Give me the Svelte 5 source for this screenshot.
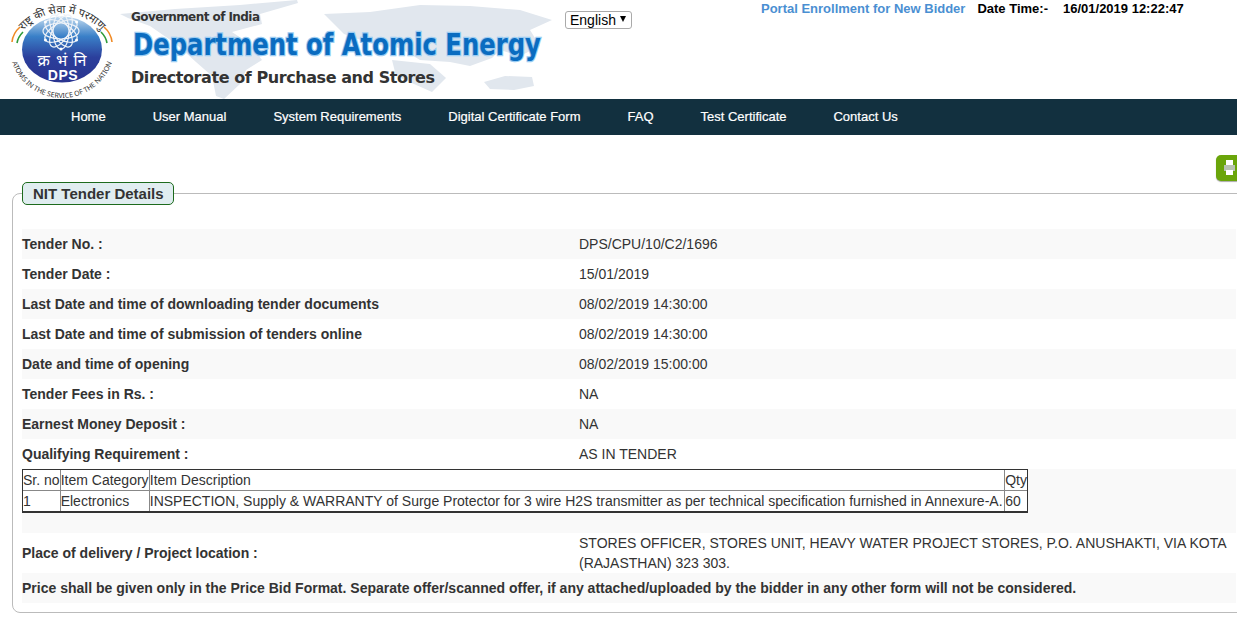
<script>
	const details = [
		['Tender No. :', 'DPS/CPU/10/C2/1696'],
		['Tender Date :', '15/01/2019'],
		['Last Date and time of downloading tender documents', '08/02/2019 14:30:00'],
		['Last Date and time of submission of tenders online', '08/02/2019 14:30:00'],
		['Date and time of opening', '08/02/2019 15:00:00'],
		['Tender Fees in Rs. :', 'NA'],
		['Earnest Money Deposit :', 'NA'],
		['Qualifying Requirement :', 'AS IN TENDER']
	];

	const menu = ['Home', 'User Manual', 'System Requirements', 'Digital Certificate Form', 'FAQ', 'Test Certificate', 'Contact Us'];

	// atom petals of the logo
	const petals = [0, 30, 60, 90, 120, 150];
	const dots = [0, 60, 120, 180, 240, 300];
</script>

<div class="page">
	<header>
		<svg class="brand" width="560" height="99" viewBox="0 0 560 99">
			<defs>
				<path id="arcTop" d="M 17 39 A 52 52 0 0 1 107 39" />
				<path id="arcBottom" d="M 9 45 A 53 53 0 0 0 115 45" />
				<linearGradient id="discFill" x1="0" y1="0" x2="0" y2="1">
					<stop offset="0" stop-color="#c4dcf0" />
					<stop offset="0.3" stop-color="#3a80c8" />
					<stop offset="0.62" stop-color="#2b3f9c" />
					<stop offset="1" stop-color="#2a3490" />
				</linearGradient>
			</defs>

			<!-- world map behind the title -->
			<g fill="#e1e7ee">
				<path d="M120 14 L175 9 L240 5 L297 0 L298 3 L260 14 L262 24 L232 32 L250 44 L262 60 L246 70 L240 84 L224 99 L216 96 L212 76 L196 62 L176 44 L150 26 L128 18 Z" />
				<path d="M324 14 L370 12 L420 5 L470 6 L520 10 L552 20 L530 30 L540 46 L520 56 L500 50 L492 58 L470 66 L450 62 L420 60 L400 48 L372 44 L344 34 Z" />
				<path d="M484 82 L505 76 L532 77 L534 86 L514 90 L490 89 Z" />
				<path d="M392 60 L430 64 L446 78 L432 92 L414 84 L396 76 Z" />
			</g>

			<text class="gov" x="131" y="20.5" textLength="129">Government of India</text>
			<text class="dept" transform="translate(133 55) scale(0.81 1)">Department of  Atomic Energy</text>
			<text class="dir" x="131" y="83" textLength="304">Directorate of  Purchase and Stores</text>

			<!-- DPS logo -->
			<ellipse cx="62" cy="49.5" rx="40" ry="33" fill="url(#discFill)" />
			<g fill="none" stroke="#eef2f8" stroke-width="1.2">
				{#each petals as a}
					<ellipse cx="61" cy="31" rx="8" ry="18" transform="rotate({a} 61 31)" />
				{/each}
			</g>
			<g fill="#fff">
				{#each dots as a}
					<circle cx="61" cy="13" r="1.5" transform="rotate({a} 61 31)" />
				{/each}
			</g>
			<text class="hin" x="62" y="66" text-anchor="middle">क्र भं नि</text>
			<text class="dps" x="63" y="80" text-anchor="middle">DPS</text>
			<text class="ring"><textPath href="#arcTop" startOffset="50%" text-anchor="middle">राष्ट्र की सेवा में परमाणु</textPath></text>
			<text class="ring en"><textPath href="#arcBottom" startOffset="50%" text-anchor="middle">ATOMS IN THE SERVICE OF THE NATION</textPath></text>
			<g fill="none" stroke-width="1.6">
				<path d="M12 42 Q13 33 20 27" stroke="#f08a24" />
				<path d="M17 43 Q18 37 23 32" stroke="#2e9b3a" />
				<path d="M112 42 Q111 33 104 27" stroke="#f08a24" />
				<path d="M107 43 Q106 37 101 32" stroke="#2e9b3a" />
			</g>
		</svg>

		<span class="lang">
			<select>
				<option>English</option>
			</select>
		</span>

		<a class="enroll" href="#enroll">Portal Enrollment for New Bidder</a>
		<span class="time-label">Date Time:-</span>
		<span class="time">16/01/2019 12:22:47</span>
	</header>

	<nav>
		{#each menu as item}
			<a href="#menu">{item}</a>
		{/each}
	</nav>

	<div class="tools">
		<button class="print" aria-label="Print">
			<svg width="11" height="16" viewBox="0 0 11 16">
				<path d="M2 0 H9 V5 H2 Z" fill="#fff" />
				<path d="M0 5 H11 V11 H0 Z" fill="#b9c2b4" />
				<path d="M2 10 H9 V15 H2 Z" fill="#fff" />
			</svg>
		</button>
	</div>

	<fieldset>
		<legend>NIT Tender Details</legend>

		{#each details as [label, value]}
			<div class="row">
				<div class="label">{label}</div>
				<div class="value">{value}</div>
			</div>
		{/each}

		<div class="row items">
			<table>
				<thead>
					<tr>
						<td class="c1">Sr. no</td>
						<td class="c2">Item Category</td>
						<td>Item Description</td>
						<td class="c4">Qty</td>
					</tr>
				</thead>
				<tbody>
					<tr>
						<td>1</td>
						<td>Electronics</td>
						<td>INSPECTION, Supply &amp; WARRANTY of Surge Protector for 3 wire H2S transmitter as per technical specification furnished in Annexure-A.</td>
						<td>60</td>
					</tr>
				</tbody>
			</table>
		</div>

		<div class="row tall">
			<div class="label">Place of delivery / Project location :</div>
			<div class="value">STORES OFFICER, STORES UNIT, HEAVY WATER PROJECT STORES, P.O. ANUSHAKTI, VIA KOTA (RAJASTHAN) 323 303.</div>
		</div>

		<div class="row">
			<div class="label wide">Price shall be given only in the Price Bid Format. Separate offer/scanned offer, if any attached/uploaded by the bidder in any other form will not be considered.</div>
		</div>
	</fieldset>
</div>

<style>
	:global(body) {
		margin: 0;
		background: #fff;
		overflow: hidden;
	}

	.page {
		width: 1237px;
		height: 632px;
		overflow: hidden;
		font-family: "Liberation Sans", Arial, sans-serif;
		font-size: 14px;
		color: #333;
	}

	header {
		display: flex;
		align-items: flex-start;
		height: 99px;
		font-size: 14px;
	}

	.brand {
		flex: none;
		display: block;
	}

	.gov, .dir {
		font-family: "DejaVu Sans", sans-serif;
		font-weight: bold;
		fill: #333;
	}

	.gov { font-size: 12px; }
	.dir { font-size: 16px; }

	.dept {
		font-family: "DejaVu Sans", sans-serif;
		font-weight: bold;
		font-size: 30px;
		fill: #0a6cc0;
		stroke: #9ccdf2;
		stroke-width: 2.5px;
		paint-order: stroke;
	}

	.hin {
		font-family: "Noto Sans", "DejaVu Sans", sans-serif;
		font-size: 16px;
		word-spacing: 2px;
		fill: #fff;
	}

	.dps {
		font-family: "Liberation Sans", sans-serif;
		font-weight: bold;
		font-size: 14px;
		letter-spacing: 0.6px;
		fill: #fff;
	}

	.ring {
		font-family: "Noto Sans", "DejaVu Sans", sans-serif;
		font-size: 11px;
		fill: #333;
	}

	.ring.en {
		font-size: 7px;
	}

	.lang {
		position: relative;
		display: block;
		margin: 11px 0 0 5px;
	}

	.lang::after {
		content: "";
		position: absolute;
		right: 6px;
		top: 5px;
		border-style: solid;
		border-width: 6px 3.5px 0;
		border-color: #000 transparent transparent;
		pointer-events: none;
	}

	select {
		display: block;
		appearance: none;
		width: 67px;
		height: 18px;
		padding: 0 0 0 4px;
		font-family: "Liberation Sans", Arial, sans-serif;
		font-size: 14px;
		color: #000;
		background: #fff;
		border: 1px solid #aaa;
		border-radius: 3px;
	}

	.enroll {
		margin: 1px 0 0 129px;
		color: #4a8fd2;
		text-decoration: none;
		font-weight: bold;
		font-size: 13px;
	}

	.time-label {
		margin: 1px 0 0 12px;
		color: #000;
		font-weight: bold;
		font-size: 13px;
	}

	.time {
		margin: 1px 0 0 15px;
		color: #000;
		font-weight: bold;
		font-size: 13px;
	}

	nav {
		display: flex;
		gap: 47px;
		align-items: center;
		height: 36px;
		box-sizing: border-box;
		padding: 0 0 2px 71px;
		background: #12303f;
	}

	nav a {
		color: #fff;
		text-decoration: none;
		font-size: 13px;
		-webkit-text-stroke: 0.2px #fff;
	}

	.tools {
		display: flex;
		justify-content: flex-end;
		height: 47px;
		padding-top: 20px;
		box-sizing: border-box;
	}

	.print {
		flex: none;
		width: 26px;
		height: 26px;
		margin-right: -5px;
		padding: 0 0 0 8px;
		border: none;
		border-radius: 5px;
		background: #6aa50a;
		display: flex;
		align-items: center;
		justify-content: flex-start;
		box-shadow: 0 1px 1px #aaa;
	}

	fieldset {
		margin: 0 -20px 0 12px;
		padding: 24px 20px 9px 9px;
		border: 1px solid #bbb;
		border-radius: 8px;
		min-width: 0;
	}

	legend {
		margin: 0 14px 0 0;
		padding: 0 9px 0 10px;
		height: 23px;
		box-sizing: border-box;
		line-height: 21px;
		font-size: 15px;
		font-weight: bold;
		color: #333;
		background: #e0edf0;
		border: 1px solid #1d6b1d;
		border-radius: 5px;
	}

	.row {
		display: flex;
		align-items: center;
		height: 30px;
	}

	.row:nth-of-type(odd) {
		background: #f9f9f9;
	}

	.label {
		width: 557px;
		flex: none;
		font-weight: bold;
	}

	.label.wide {
		width: auto;
	}

	.value {
		line-height: 20px;
	}

	.items {
		height: 64px;
		align-items: flex-start;
		background: #f9f9f9;
	}

	.tall {
		height: 40px;
		background: #fff;
	}

	table {
		border-collapse: separate;
		border-spacing: 0;
		border: 1px solid #333;
		border-bottom-width: 2px;
		width: 1006px;
		background: #fff;
		line-height: 20px;
	}

	td {
		border: 1px solid #888;
		border-width: 0 1px 1px 0;
		padding: 0;
		white-space: nowrap;
	}

	td:last-child {
		border-right: none;
	}

	tbody td {
		border-bottom: none;
	}
</style>
